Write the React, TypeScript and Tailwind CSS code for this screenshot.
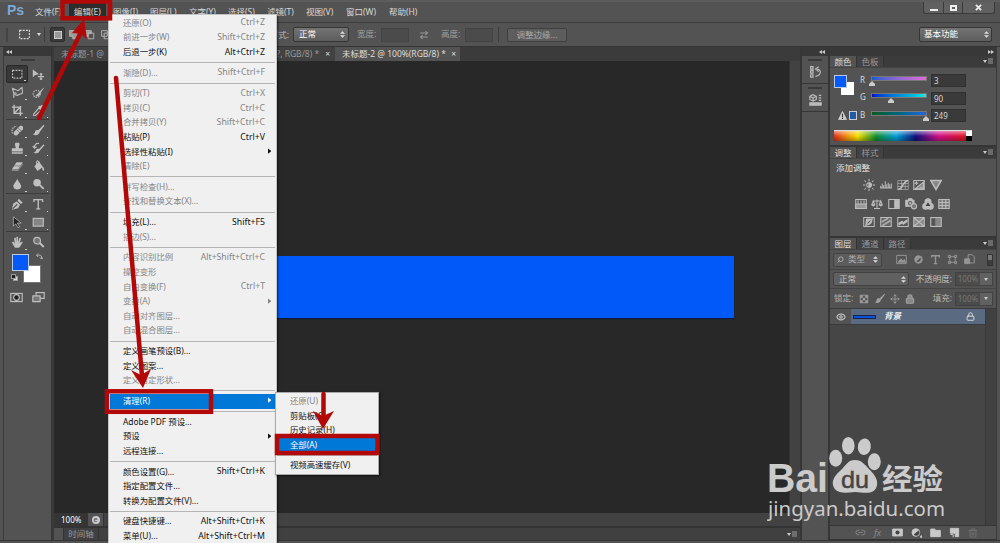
import React from 'react';
import { Link2, Trash2, Lock, Move, Search, Eye, ArrowLeftRight } from 'lucide-react';

type MenuEntry = {
  label: string;
  keys?: string;
  enabled?: boolean;
  submenu?: boolean;
  active?: boolean;
};

const menuBar = [
  { label: '文件(F)', width: 'w-[39px]' },
  { label: '编辑(E)', width: 'w-[39px]', open: true },
  { label: '图像(I)', width: 'w-[37px]' },
  { label: '图层(L)', width: 'w-[39px]' },
  { label: '文字(Y)', width: 'w-[39px]' },
  { label: '选择(S)', width: 'w-[39px]' },
  { label: '滤镜(T)', width: 'w-[39px]' },
  { label: '视图(V)', width: 'w-[40px]' },
  { label: '窗口(W)', width: 'w-[43px]' },
  { label: '帮助(H)', width: 'w-[40px]' },
];

const editMenu: MenuEntry[][] = [
  [
    { label: '还原(O)', keys: 'Ctrl+Z' },
    { label: '前进一步(W)', keys: 'Shift+Ctrl+Z' },
    { label: '后退一步(K)', keys: 'Alt+Ctrl+Z', enabled: true },
  ],
  [{ label: '渐隐(D)...', keys: 'Shift+Ctrl+F' }],
  [
    { label: '剪切(T)', keys: 'Ctrl+X' },
    { label: '拷贝(C)', keys: 'Ctrl+C' },
    { label: '合并拷贝(Y)', keys: 'Shift+Ctrl+C' },
    { label: '粘贴(P)', keys: 'Ctrl+V', enabled: true },
    { label: '选择性粘贴(I)', enabled: true, submenu: true },
    { label: '清除(E)' },
  ],
  [{ label: '拼写检查(H)...' }, { label: '查找和替换文本(X)...' }],
  [{ label: '填充(L)...', keys: 'Shift+F5', enabled: true }, { label: '描边(S)...' }],
  [
    { label: '内容识别比例', keys: 'Alt+Shift+Ctrl+C' },
    { label: '操控变形' },
    { label: '自由变换(F)', keys: 'Ctrl+T' },
    { label: '变换(A)', submenu: true },
    { label: '自动对齐图层...' },
    { label: '自动混合图层...' },
  ],
  [
    { label: '定义画笔预设(B)...', enabled: true },
    { label: '定义图案...', enabled: true },
    { label: '定义自定形状...' },
  ],
  [{ label: '清理(R)', enabled: true, submenu: true, active: true }],
  [
    { label: 'Adobe PDF 预设...', enabled: true },
    { label: '预设', enabled: true, submenu: true },
    { label: '远程连接...', enabled: true },
  ],
  [
    { label: '颜色设置(G)...', keys: 'Shift+Ctrl+K', enabled: true },
    { label: '指定配置文件...', enabled: true },
    { label: '转换为配置文件(V)...', enabled: true },
  ],
  [
    { label: '键盘快捷键...', keys: 'Alt+Shift+Ctrl+K', enabled: true },
    { label: '菜单(U)...', keys: 'Alt+Shift+Ctrl+M', enabled: true },
  ],
];

const purgeMenu: MenuEntry[] = [
  { label: '还原(U)' },
  { label: '剪贴板(C)', enabled: true },
  { label: '历史记录(H)', enabled: true },
  { label: '全部(A)', enabled: true, active: true },
];

const Glyph = ({ children, className = 'h-[14px] w-[14px]' }: { children: React.ReactNode; className?: string }) => (
  <svg viewBox="0 0 16 16" className={`shrink-0 ${className}`} fill="none" stroke="currentColor" strokeWidth="1.4">
    {children}
  </svg>
);

// Toolbox glyphs, two per row
const toolGroups: React.ReactNode[][] = [
  [
    <rect x="2" y="3" width="12" height="10" strokeDasharray="2.4 1.4" />,
    <><path d="M1 2v10l3-3 5-1z" fill="currentColor" stroke="none" /><path d="M11.500 7v8M7.500 11h8M10 8.500l1.500-1.500L13 8.500M10 13.500l1.500 1.500 1.500-1.500" /></>,
    <path d="M3 15c1-1 1-2 0-3M4 12L2 3l7 3 5-4 1 7-7 3-4-1c-2-2 2-3 3-1" />,
    <><circle cx="6" cy="10" r="4.500" strokeDasharray="2 1.200" /><path d="M15 2L9 8l-5 5c4 1 7-1 7-4l4-6z" fill="currentColor" stroke="none" /></>,
    <path d="M4 1v11h11M1 4h11v11M5 11l8-8" strokeWidth="1.800" />,
    <><path d="M9 5l3 3-8 7H2v-2z" /><path d="M8 4l5 5 1-2-1-1 2-3-2-2-3 2-1-1z" fill="currentColor" stroke="none" /></>,
  ],
  [
    <><path d="M2 12c-2-5 1-9 5-9" strokeDasharray="2 1" /><path d="M4 10l7-7c3-2 6 1 4 4l-7 7c-3 2-6-1-4-4z" fill="currentColor" stroke="none" /><path d="M7 7l5 5M9 5l5 5" stroke="#535353" strokeWidth=".8" /></>,
    <path d="M15 1L8 8c-2-1-4 0-4 2s-2 3-3 3c4 3 8 1 9-3l6-8z" fill="currentColor" stroke="none" />,
    <path d="M6 1h4c2 2 0 4 0 7h5v4H1V8h5c0-3-2-5 0-7zM1 13h14v2H1z" fill="currentColor" stroke="none" />,
    <><path d="M15 3L9 9c-2-1-4 0-4 2s-2 2-3 2c4 3 7 1 8-2l6-7z" fill="currentColor" stroke="none" /><path d="M9 2C5 1 3 4 3 8M1 5l2 3 3-2" /></>,
    <><path d="M7 3h8L9 12H1z" fill="currentColor" stroke="none" /><path d="M9 12l6-9v3l-6 8H1v-2" fill="#8a8a8a" stroke="none" /><path d="M4 7.500h8" stroke="#6d6d6d" strokeWidth=".8" /></>,
    <><path d="M3 8l6-6 5 7-7 5zM13 8c3 2 3 4 2 6-2 0-2-3-2-6z" fill="currentColor" stroke="none" /><path d="M6 7V3c0-3 3-2 3 1" /></>,
    <path d="M8 1c1 4 5 6 5 10 0 5-10 5-10 0 0-4 4-6 5-10z" fill="currentColor" stroke="none" />,
    <><circle cx="6.500" cy="6" r="4.800" fill="currentColor" stroke="none" /><path d="M10 9l5 5" strokeWidth="2.200" /></>,
  ],
  [
    <><path d="M10 1l5 5-3 2-3 5-8 2 2-8 5-3z" fill="currentColor" stroke="none" /><path d="M2 14l6-6M8 4l5 5" stroke="#535353" /></>,
    <path d="M2.500 5V2h11v3M8 2v12M5.500 14h5" strokeWidth="1.700" />,
    <path d="M3 1v12l3-3 3 5 2-1-3-5h5z" fill="#222" strokeWidth=".9" />,
    <rect x="1.500" y="3" width="13" height="10" fill="#858585" />,
  ],
  [
    <path d="M5 15L1 8l2-1 2 3-1-7 2-1 1 6V1h2v7l2-6 2 1-2 6 3-2 1 1-3 5-2 2z" fill="currentColor" stroke="none" />,
    <><circle cx="6.500" cy="6" r="4.300" fill="#777" /><path d="M10 9l5 5" strokeWidth="2.500" /></>,
  ],
];

const adjustments: React.ReactNode[][] = [
  [
    <><circle cx="8" cy="8" r="3" /><path d="M8 5a3 3 0 010 6zM8 0v3M8 13v3M0 8h3M13 8h3M2 2l2 2M12 12l2 2M14 2l-2 2M2 14l2-2" fill="currentColor" /></>,
    <path d="M1 12V9M3 12V6M5 12V8M7 12V3M9 12V7M11 12V5M13 12V7M15 12V6M0 12h16" strokeWidth="1.300" />,
    <><path d="M1 2h14v12H1zM6 2v12M11 2v12M1 6h14M1 10h14" strokeWidth=".8" /><path d="M1 14c8 0 5-11 14-12" strokeWidth="1.900" /></>,
    <><path d="M1 2h14v12H1z" /><path d="M3 13L14 4v9z" fill="#888" /><path d="M4.500 3v5M2 5.500h5M9 11h4" /></>,
    <path d="M1 2h14L8 14z" fill="#888" strokeWidth="2" />,
  ],
  [
    <><path d="M1 2h14v12H1zM4 3v5M8 3v5M12 3v5" /><path d="M1 8h14v6H1z" fill="#999" /></>,
    <path d="M8 2v12M4 14h8M3 4h10M3 4L1 9h4zM13 4l-2 5h4zM1 9c1 2 3 2 4 0M11 9c1 2 3 2 4 0" />,
    <><path d="M1 2h14v12H1z" /><path d="M9 3h5v10H9z" fill="currentColor" /></>,
    <><path d="M1 3h3l1-2h4l1 2h2v8H1z" fill="currentColor" /><circle cx="7" cy="7" r="2.300" stroke="#535353" /><circle cx="12" cy="11" r="3.500" fill="#777" /></>,
    <><circle cx="8" cy="5" r="4" fill="currentColor" /><circle cx="5" cy="11" r="4" fill="currentColor" /><circle cx="11" cy="11" r="4" fill="currentColor" /><path d="M8 7l2 3H6z" fill="#444" stroke="#444" /></>,
    <path d="M1 2h14v12H1zM1 6h14M1 10h14M5.500 2v12M10.500 2v12" fill="#777" strokeWidth="1.400" />,
  ],
  [
    <><path d="M1 2h14v12H1zM3 13L13 3" /><path d="M5 4h7c0 6-3 8-8 8 0-3 0-6 1-8z" fill="currentColor" /><path d="M6 10l4-4" stroke="#555" /></>,
    <><path d="M1 2h14v12H1z" fill="#666" /><path d="M2 8l9-5M3 13l11-7" strokeWidth="2.600" stroke="#aaa" /></>,
    <><path d="M1 2h14v12H1z" /><path d="M2 9l5-3 1 2 6-4v4l-6 4-1-2-5 3z" fill="currentColor" stroke="none" /></>,
    <path d="M1 2h14v12H1zM1 2l14 12M15 2L1 14M1 2l7 6-7 6z" fill="#888" />,
    <><path d="M1 2h14v12H1z" fill="#888" /><path d="M2 3h5v10H2z" fill="#555" stroke="none" /></>,
  ],
];

const MenuRow = ({ item }: { item: MenuEntry }) => (
  <div
    className={`flex h-[14.6px] items-center pr-[10px] pl-[13px] whitespace-nowrap ${
      item.active ? 'bg-[#0078d7] text-white' : item.enabled ? 'text-[#111]' : 'text-[#858585]'
    }`}
  >
    <span>{item.label}</span>
    {item.keys && <span className="ml-auto text-[8.700px]">{item.keys}</span>}
    {item.submenu && (
      <svg viewBox="0 0 4 6" className="mr-[-6px] mb-[2px] ml-auto h-[6px] w-[3.500px]">
        <path d="M0 0l4 3-4 3z" fill="currentColor" />
      </svg>
    )}
  </div>
);

const UpDown = () => (
  <svg viewBox="0 0 6 8" className="h-[7px] w-[5px] shrink-0">
    <path d="M0 3l3-3 3 3zM0 5l3 3 3-3z" fill="#ddd" />
  </svg>
);

const Chevrons = ({ flip = false }: { flip?: boolean }) => (
  <svg viewBox="0 0 6 4" className={`h-[4px] w-[6px] ${flip ? 'rotate-180' : ''}`}>
    <path d="M3 0v4L0 2zM6 0v4L3 2z" fill="#ccc" />
  </svg>
);

const PanelMenu = () => (
  <svg viewBox="0 0 10 7" className="ml-auto h-[7px] w-[10px]">
    <path d="M0 2h4L2 5z" fill="#ccc" />
    <path d="M5 1h5M5 3h5M5 5h5" stroke="#999" />
  </svg>
);

const PanelTabs = ({ tabs }: { tabs: string[] }) => (
  <div className="flex h-[12px] shrink-0 items-stretch border-b border-[#444] bg-[#3b3b3b] pr-[3px] leading-[12px]">
    {tabs.map((tab, i) => (
      <div
        key={tab}
        className={`w-[27px] border-r border-[#333] text-center ${i === 0 ? 'bg-[#535353] text-[#ddd]' : 'bg-[#424242] text-[#999]'}`}
      >
        {tab}
      </div>
    ))}
    <div className="ml-auto flex items-center">
      <PanelMenu />
    </div>
  </div>
);

const Toolbox = () => (
  <div className="flex w-[48px] shrink-0 flex-col border-r border-[#353535] text-[#c0c0c0]">
    <div className="flex h-[9px] shrink-0 items-center bg-[#383838] pl-[2px]">
      <Chevrons />
    </div>
    <div className="mx-auto mt-[3px] mb-[4px] h-[2px] w-[14px] shrink-0 border-y border-[#3a3a3a]" />
    {toolGroups.map((group, g) => (
      <div
        key={g}
        className={`mx-[2px] mb-[1px] grid grid-cols-2 ${g < toolGroups.length - 1 ? 'border-b border-[#3c3c3c]' : 'pb-px'}`}
      >
        {group.map((icon, i) => (
          <div
            key={i}
            className={`relative flex h-[18px] items-center justify-center ${
              g === 0 && i === 0 ? 'rounded-[2px] border border-[#292929] bg-[#383838]' : ''
            }`}
          >
            <Glyph className="h-[12.500px] w-[12.500px]">{icon}</Glyph>
            {!(g === 0 && i === 1) && !(g === 3 && i === 1) && (
              <span className="absolute right-[1px] bottom-[1px] h-[1.500px] w-[1.500px] bg-[#ccc]" />
            )}
          </div>
        ))}
      </div>
    ))}
    <div className="relative -mt-[1px] ml-[8px] h-[31px] w-[29px] shrink-0">
      <div className="absolute right-0 bottom-0 h-[18px] w-[18px] border border-[#777] bg-white" />
      <div className="absolute top-[2px] left-0 h-[17px] w-[17px] border border-[#b5cae8] bg-[#035af9]" />
      <Glyph className="absolute top-[1px] right-[-2px] h-[7px] w-[7px]">
        <path d="M2 5h7c3 0 4 2 4 8M5 1L1 5l4 4M9 10l4 4 3-4" strokeWidth="2" />
      </Glyph>
      <div className="absolute bottom-[2px] left-[1px] h-[5px] w-[5px] border border-[#999] bg-[#ddd]" />
      <div className="absolute bottom-[4px] left-[-1px] h-[5px] w-[5px] border border-[#999] bg-[#222]" />
    </div>
    <div className="mx-[2px] mt-[5px] grid h-[18px] grid-cols-2 place-items-center">
      <Glyph className="h-[13px] w-[13px]">
        <rect x="1" y="3" width="14" height="10" />
        <circle cx="8" cy="8" r="3.500" fill="#222" />
      </Glyph>
      <Glyph className="h-[13px] w-[13px]">
        <path d="M5 2h10v7H5z" />
        <path d="M1 6h9v7H1z" fill="#777" />
      </Glyph>
    </div>
  </div>
);

const ColorSlider = ({ name, value, track, thumb }: { name: string; value: string; track: string; thumb: string }) => (
  <div className="flex h-[17.500px] items-center">
    <span className="w-[11px] pb-[2px] text-[8px]">{name}</span>
    <div className="relative mb-[5px] h-[5px] w-[56px]">
      <div className={`h-full w-full border border-[#777] ${track}`} />
      <svg viewBox="0 0 6 5" className={`absolute top-[5px] h-[5px] w-[6px] ${thumb}`}>
        <path d="M3 0l3 3v2H0V3z" fill="#ccc" />
      </svg>
    </div>
    <div className="ml-[4px] h-[13px] w-[35px] border border-[#303030] bg-[#3a3a3a] pl-[2px] text-[8px] leading-[12px]">{value}</div>
  </div>
);

const ColorPanel = () => (
  <>
    <PanelTabs tabs={['颜色', '色板']} />
    <div className="flex h-[62px] shrink-0 pt-[4px]">
      <div className="relative w-[30px]">
        <div className="absolute top-[10px] left-[11px] h-[13px] w-[13px] bg-white" />
        <div className="absolute top-[3px] left-[4px] h-[13px] w-[13px] border border-[#b5cae8] bg-[#035af9]" />
        <div className="absolute top-[39px] left-[8px] flex items-center gap-[2px]">
          <Glyph className="h-[9px] w-[9px]">
            <path d="M8 1l7 14H1z" fill="#ccc" />
            <path d="M8 5v6M8 12v2" stroke="#333" strokeWidth="2" />
          </Glyph>
          <div className="h-[9px] w-[8px] border border-[#ccc] bg-[#1f5ba7]" />
        </div>
      </div>
      <div>
        <ColorSlider name="R" value="3" track="bg-linear-to-r from-[#1a5ad0] to-[#e668d8]" thumb="left-[-2px]" />
        <ColorSlider name="G" value="90" track="bg-linear-to-r from-[#0808d0] to-[#2ae6dc]" thumb="left-[17px]" />
        <ColorSlider name="B" value="249" track="bg-linear-to-r from-[#0c5a18] to-[#2464e0]" thumb="left-[52px]" />
      </div>
    </div>
    <div className="ml-[4px] flex h-[11px] w-[138px] shrink-0 border-t border-[#ddd]">
      <div className="w-[132px] bg-[linear-gradient(to_right,#e03020,#f08010_8%,#f5e000_18%,#109030_32%,#00a0d8_47%,#101080_62%,#d0108a_79%,#e01820)]">
        <div className="h-full bg-linear-to-b from-white/50 via-transparent to-black/30" />
      </div>
      <div className="w-[6px] bg-black">
        <div className="h-[5px] bg-white" />
      </div>
    </div>
    <div className="h-[6px] shrink-0 border-b-2 border-[#363636]" />
  </>
);

const AdjustmentsPanel = () => (
  <>
    <PanelTabs tabs={['调整', '样式']} />
    <div className="h-[79px] shrink-0 border-b-2 border-[#363636] pt-[3px] text-[#bdbdbd]">
      <div className="pl-[6px] leading-[12px] text-[#e2e2e2]">添加调整</div>
      <div className="mt-[2px] flex w-[145px] flex-col items-center">
        {adjustments.map((row, r) => (
          <div key={r} className="flex h-[18.500px] items-center gap-[4.800px]">
            {row.map((icon, i) => (
              <Glyph key={i} className="h-[12px] w-[12px]">{icon}</Glyph>
            ))}
          </div>
        ))}
      </div>
    </div>
  </>
);

const PercentField = () => (
  <div className="flex h-[14px] w-[38px] border border-[#424242] bg-[#4b4b4b] leading-[12px] text-[#777]">
    <span className="w-[24px] text-center text-[8px]">100%</span>
    <span className="flex flex-1 items-center justify-center bg-[#616161]">
      <svg viewBox="0 0 4 3" className="h-[3px] w-[4px]"><path d="M0 0h4L2 3z" fill="#ccc" /></svg>
    </span>
  </div>
);

const LayersPanel = () => (
  <>
    <PanelTabs tabs={['图层', '通道', '路径']} />
    <div className="flex h-[20px] shrink-0 items-center border-b border-[#444] px-[3px] text-[#b0b0b0]">
      <div className="flex h-[14px] w-[49px] items-center gap-[4px] rounded-[2px] border border-[#424242] bg-[#5c5c5c] px-[3px]">
        <Search className="h-[7px] w-[7px] shrink-0 -scale-x-100" strokeWidth={3} />
        <span className="whitespace-nowrap">类型</span>
        <span className="ml-auto flex"><UpDown /></span>
      </div>
      <div className="ml-[14px] flex items-center gap-[6px] text-[#959595]">
        <Glyph className="h-[11px] w-[11px]"><path d="M1 2h14v12H1z" /><path d="M3 12l4-5 3 3 2-2 2 4z" fill="currentColor" /></Glyph>
        <Glyph className="h-[11px] w-[11px]"><circle cx="8" cy="8" r="5.500" fill="currentColor" /><path d="M11 5a4.500 4.500 0 01-6 6z" fill="#555" stroke="none" /></Glyph>
        <Glyph className="h-[11px] w-[11px]"><path d="M2.500 5V2.500h11V5M8 2v12M5.500 14h5" strokeWidth="2" /></Glyph>
        <Glyph className="h-[11px] w-[11px]"><path d="M4 4h8v8H4zM2 2h3v3H2zM11 2h3v3h-3zM2 11h3v3H2zM11 11h3v3h-3z" /></Glyph>
        <Glyph className="h-[11px] w-[11px]"><path d="M6 7V1h6l3 3v9H8" /><path d="M1 7h7v7H1z" fill="currentColor" /></Glyph>
      </div>
      <div className="ml-auto h-[12px] w-[6px] border border-[#333] bg-[#3d3d3d]"><div className="h-[5px] bg-[#777]" /></div>
    </div>
    <div className="flex h-[19px] shrink-0 items-center border-b border-[#444] px-[3px] text-[#c0c0c0]">
      <div className="flex h-[14px] w-[76px] items-center justify-between rounded-[2px] border border-[#424242] bg-[#606060] pr-[2px] pl-[5px]">
        正常
        <UpDown />
      </div>
      <span className="mr-[3px] ml-auto whitespace-nowrap">不透明度:</span>
      <PercentField />
    </div>
    <div className="flex h-[19px] shrink-0 items-center px-[3px] text-[#b5b5b5]">
      <span className="pl-[1px] whitespace-nowrap">锁定:</span>
      <div className="ml-[6px] flex items-center gap-[5px] text-[#a0a0a0]">
        <Glyph className="h-[10px] w-[10px]"><path d="M2 2h12v12H2z" /><path d="M2 2h4v4H2zM10 2h4v4h-4zM6 6h4v4H6zM2 10h4v4H2zM10 10h4v4h-4z" fill="currentColor" stroke="none" /></Glyph>
        <Glyph className="h-[11px] w-[11px]">{toolGroups[1][1]}</Glyph>
        <Move className="h-[10px] w-[10px]" />
        <Lock className="h-[10px] w-[10px]" fill="#888" strokeWidth={2.5} />
      </div>
      <span className="mr-[3px] ml-auto whitespace-nowrap">填充:</span>
      <PercentField />
    </div>
    <div className="flex min-h-0 flex-1 border-t border-[#3a3a3a] bg-[#464646]">
      <div className="flex-1">
        <div className="flex h-[16px] items-center border-b border-[#3a3a3a] bg-[#5a6a80]">
          <div className="flex h-full w-[21px] items-center justify-center bg-[#535353]">
            <Eye className="h-[10px] w-[10px] text-[#ccc]" strokeWidth={2.500} />
          </div>
          <div className="ml-[2px] h-[4px] w-[23px] border border-[#17254a] bg-[#0d51d6]" />
          <span className="ml-[8px] font-bold text-[#eee] italic">背景</span>
          <Lock className="mr-[10px] ml-auto h-[9px] w-[9px] text-[#ddd]" strokeWidth={2.500} />
        </div>
      </div>
      <div className="w-[11px] border-l border-[#393939] bg-[#414141]" />
    </div>
    <div className="flex h-[15px] shrink-0 items-center gap-[8px] border-y border-[#353535] pl-[25px] text-[#c8c8c8]">
      <Link2 className="h-[11px] w-[11px] text-[#888]" />
      <span className="w-[10px] text-[9px] text-[#888] italic">fx</span>
      <Glyph className="h-[11px] w-[11px]"><path d="M1 3h14v10H1z" fill="currentColor" /><circle cx="8" cy="8" r="3" fill="#444" stroke="none" /></Glyph>
      <Glyph className="h-[11px] w-[11px]"><circle cx="7" cy="8" r="5.500" fill="currentColor" /><path d="M11 5a4.500 4.500 0 01-7 6z" fill="#444" stroke="none" /><path d="M14 13h2v2h-2z" fill="currentColor" /></Glyph>
      <Glyph className="h-[11px] w-[11px]"><path d="M1 3h6l1 2h7v9H1z" fill="currentColor" /></Glyph>
      <Glyph className="h-[11px] w-[11px]"><path d="M2 2h12v12H9V9H2z" fill="currentColor" /><path d="M2 11h4v4" /></Glyph>
      <Trash2 className="h-[10px] w-[10px] text-[#777]" />
    </div>
  </>
);

const Watermark = () => (
  <svg viewBox="0 0 180 90" className="absolute top-[435px] left-[767px] h-[90px] w-[180px]" fill="#cbcbcb">
    <text x="0" y="56.500" textLength="61" lengthAdjust="spacingAndGlyphs" className="font-['Liberation_Sans',sans-serif] text-[40px] font-bold">Bai</text>
    <ellipse cx="68.700" cy="23.300" rx="6.500" ry="8.500" />
    <ellipse cx="81.300" cy="10.700" rx="6.300" ry="8.700" />
    <ellipse cx="97.300" cy="11.700" rx="6.500" ry="8.300" transform="rotate(8 97 12)" />
    <ellipse cx="107.300" cy="26.700" rx="6.500" ry="8.500" />
    <path d="M88 25c-7 0-9 5-14 10-6 5-9 10-8 15 2 9 11 8 22 7 11 1 20 3 22-7 1-5-2-10-7-15-5-5-8-10-15-10z" />
    <text x="74" y="53" textLength="28" lengthAdjust="spacingAndGlyphs" fill="#454545" stroke="#454545" strokeWidth=".5" className="font-['Liberation_Sans',sans-serif] text-[24px]">du</text>
    <text x="115" y="55" textLength="61" lengthAdjust="spacingAndGlyphs" className="font-['Noto_Sans_CJK_SC',sans-serif] text-[29px] font-bold">经验</text>
    <text x="1" y="80.500" textLength="177" lengthAdjust="spacingAndGlyphs" className="font-['Noto_Sans',sans-serif] text-[20px]">jingyan.baidu.com</text>
  </svg>
);

// Red boxes and arrows that walk through the steps
const Annotations = () => (
  <svg viewBox="0 0 1000 543" className="absolute inset-0 h-[543px] w-[1000px]" fill="none" stroke="#b20808" strokeWidth="4.500" strokeLinecap="round">
    <rect x="62.500" y="1.500" width="47.500" height="16.800" />
    <rect x="107" y="391.300" width="104" height="20.500" />
    <rect x="277" y="436" width="100.500" height="17" />
    <path d="M39 118L83 28M116 78l26 298M323.500 394v24" />
    <g fill="#b20808" stroke="none">
      <path d="M84 19l3 20-6-5-9-1z" />
      <path d="M143 388l-12-18 10 5 10-6z" />
      <path d="M323 429l-10-18 10 5 11-5z" />
    </g>
  </svg>
);

export default function App() {
  return (
    <div className="relative flex h-[543px] w-[1000px] flex-col overflow-hidden bg-[#535353] font-['Noto_Sans','Noto_Sans_CJK_SC',sans-serif] text-[8.500px] text-[#d8d8d8]">
      {/* Menu bar */}
      <header className="flex h-[23px] shrink-0 items-start border-t-2 border-b border-t-[#5d5d5d] border-b-[#3d3d3d]">
        <div className="w-[35px] pl-[7px] font-['Liberation_Sans',sans-serif] text-[14px] leading-[17px] font-bold text-[#7ca9d6]">Ps</div>
        {menuBar.map((item) => (
          <div key={item.label} className={`h-[18px] leading-[19px] whitespace-nowrap ${item.width}`}>
            <span className={item.open ? '-ml-[5px] inline-block h-[15px] bg-[#2c2c2c] px-[5px]' : ''}>{item.label}</span>
          </div>
        ))}
        <div className="mr-[5px] ml-auto flex h-[12px] w-[72px] rounded-b-[3px] border border-t-0 border-[#3a3a3a] bg-[#616161]">
          <div className="flex w-[20px] items-center justify-center border-r border-[#3a3a3a]"><div className="mt-[4px] h-[2px] w-[8px] bg-[#eee]" /></div>
          <div className="flex w-[19px] items-center justify-center border-r border-[#3a3a3a]"><div className="h-[6px] w-[7px] border-2 border-[#eee]" /></div>
          <div className="flex flex-1 items-center justify-center"><Glyph className="h-[7px] w-[7px] text-[#eee]"><path d="M2 2l12 12M14 2L2 14" strokeWidth="4" /></Glyph></div>
        </div>
      </header>

      {/* Options bar */}
      <div className="flex h-[23px] shrink-0 items-center pl-[6px]">
        <div className="h-[14px] w-[2px] border-x border-[#444]" />
        <Glyph className="ml-[10px] h-[13px] w-[13px]"><rect x="2" y="3" width="12" height="10" strokeDasharray="2.400 1.400" /></Glyph>
        <svg viewBox="0 0 4 3" className="ml-[6px] h-[3px] w-[4px]"><path d="M0 0h4L2 3z" fill="#ddd" /></svg>
        <div className="ml-[3px] h-[15px] w-px bg-[#3d3d3d]" />
        <div className="ml-[5px] flex h-[15px] w-[15px] items-center justify-center rounded-[2px] border border-[#2c2c2c] bg-[#3a3a3a]">
          <div className="h-[8px] w-[8px] border border-[#ccc] bg-[#999]" />
        </div>
        <div className="ml-[4px] flex w-[220px] gap-[6px] text-[#bbb]">
          <Glyph className="h-[10px] w-[10px]"><path d="M1 1h9v4h5v9H6v-4H1z" fill="#999" /></Glyph>
          <Glyph className="h-[10px] w-[10px]"><path d="M1 1h9v4H5v5H1z" fill="#999" /><path d="M5 5h9v9H5z" /></Glyph>
          <Glyph className="h-[10px] w-[10px]"><path d="M1 1h9v9H1zM5 5h9v9H5z" /></Glyph>
          <span className="ml-auto leading-[10px] whitespace-nowrap">样式:</span>
        </div>
        <div className="ml-[4px] flex h-[15px] w-[56px] items-center justify-between rounded-[2px] border border-[#353535] bg-linear-to-b from-[#737373] to-[#5d5d5d] pr-[3px] pl-[5px] text-white">正常<UpDown /></div>
        <span className="ml-[8px] w-[24px] whitespace-nowrap text-[#a0a0a0]">宽度:</span>
        <div className="h-[14px] w-[28px] border border-[#434343] bg-[#4b4b4b]" />
        <ArrowLeftRight className="ml-[10px] h-[10px] w-[10px] -scale-y-100 text-[#999]" strokeWidth={2.5} />
        <span className="ml-[12px] w-[24px] whitespace-nowrap text-[#a0a0a0]">高度:</span>
        <div className="h-[14px] w-[28px] border border-[#434343] bg-[#4b4b4b]" />
        <div className="ml-[5px] h-[15px] w-px bg-[#3d3d3d]" />
        <div className="ml-[8px] h-[14px] w-[60px] rounded-[2px] border border-[#3f3f3f] bg-[#5d5d5d] text-center leading-[12px] text-[#aaa]">调整边缘...</div>
        <div className="mr-[8px] ml-auto flex h-[15px] w-[73px] items-center justify-between rounded-[2px] border border-[#353535] bg-linear-to-b from-[#737373] to-[#5d5d5d] pr-[2px] pl-[4px] text-white">基本功能<UpDown /></div>
      </div>

      {/* Workspace */}
      <div className="flex h-[495px] border-y border-[#343434] pr-[3px] pl-[3px]">
        <div className="w-px shrink-0 bg-[#3c3c3c]" />
        <Toolbox />
        <div className="w-[2px] shrink-0 bg-[#3a3a3a]" />

        <main className="flex w-[746px] shrink-0 flex-col">
          <div className="flex h-[14px] shrink-0 bg-[#3b3b3b] leading-[14px] text-[#999]">
            <div className="flex w-[281px] justify-between bg-[#424242] pr-[5px] pl-[7px]">
              <span>未标题-1 @</span>
              <span className="whitespace-nowrap">?, RGB/8) *<span className="ml-[6px] text-[#ddd]">×</span></span>
            </div>
            <div className="flex w-[125px] justify-between bg-[#535353] pr-[4px] pl-[7px] whitespace-nowrap text-[#ddd]">
              <span>未标题-2 @ 100%(RGB/8) *</span>
              <span>×</span>
            </div>
          </div>
          <div className="flex min-h-0 flex-1 bg-[#282828]">
            <div className="flex-1 pt-[195px]">
              {/* Document, centred in the canvas */}
              <div className="ml-[54px] h-[62px] w-[626px] bg-[#0259fa] shadow-[0_1px_1px_#0c1c40]" />
            </div>
            <div className="w-[11px] border-l border-[#333] bg-[#424242]" />
          </div>
          <div className="flex h-[13px] shrink-0 items-center bg-[#424242]">
            <div className="h-full w-[34px] bg-[#353535] pl-[7px] text-[8px] leading-[13px] text-white">100%</div>
            <div className="flex h-full w-[16px] items-center justify-center border-r border-[#333] bg-[#535353]">
              <div className="h-[8px] w-[8px] rounded-full bg-[#ccc] text-center text-[7px] leading-[7px] text-[#444]">e</div>
            </div>
          </div>
          <div className="flex h-[14px] shrink-0 items-center border-t-2 border-[#333] bg-[#404040] pr-[3px]">
            <div className="h-full w-[9px] bg-[#535353]" />
            <div className="h-full w-[36px] border-x border-[#333] text-center leading-[12px] text-[#999]">时间轴</div>
            <div className="ml-auto"><PanelMenu /></div>
          </div>
        </main>

        <div className="flex w-[30px] shrink-0 flex-col border-x-2 border-[#363636] text-[#bbb]">
          <div className="flex h-[9px] items-center justify-end bg-[#383838] pr-[3px]"><Chevrons /></div>
          <div className="flex h-[28px] flex-col items-center border-b border-[#363636] pt-[3px]">
            <div className="mb-[4px] h-[2px] w-[14px] border-y border-[#3a3a3a]" />
            <Glyph className="h-[13px] w-[13px]"><path d="M2 2h3v3H2zM2 7h3v3H2zM2 12h3v3H2zM8 14c8-2 7-8 2-9M12 2L8 5l4 3" /></Glyph>
          </div>
          <div className="flex h-[28px] flex-col items-center border-b border-[#363636] pt-[3px]">
            <div className="mb-[4px] h-[2px] w-[14px] border-y border-[#3a3a3a]" />
            <Glyph className="h-[13px] w-[13px]"><path d="M1 4l4-2 4 2v4l-4 2-4-2zM1 4l4 2 4-2M5 6v4M12 3h3M12 6h3M12 9h3" /><path d="M1 12h14v3H1z" fill="currentColor" /></Glyph>
          </div>
        </div>

        <aside className="flex min-w-0 flex-1 flex-col border-r border-[#3a3a3a]">
          <div className="flex h-[9px] shrink-0 items-center justify-end bg-[#383838] pr-[2px]"><Chevrons flip /></div>
          <ColorPanel />
          <AdjustmentsPanel />
          <LayersPanel />
        </aside>
      </div>

      <Watermark />

      {/* Edit menu */}
      <div className="absolute top-[14px] left-[108px] h-[535px] w-[169px] border border-[#c4c4c4] bg-[#f0f0f0] px-px pt-[0.700px] text-[8.400px] shadow-[1px_1px_2px_rgba(0,0,0,0.6)]">
        {editMenu.map((group, g) => (
          <React.Fragment key={g}>
            {g > 0 && <div className="my-[2.550px] h-px bg-[#b5b5b5]" />}
            {group.map((item) => (
              <MenuRow key={item.label} item={item} />
            ))}
          </React.Fragment>
        ))}
      </div>

      {/* Purge submenu */}
      <div className="absolute top-[392px] left-[275px] h-[83px] w-[104px] border border-[#aaa] bg-[#f0f0f0] px-px pt-[1px] text-[8.400px] shadow-[1px_1px_2px_rgba(0,0,0,0.6)]">
        {purgeMenu.map((item) => (
          <MenuRow key={item.label} item={item} />
        ))}
        <div className="my-[2.550px] h-px bg-[#b5b5b5]" />
        <MenuRow item={{ label: '视频高速缓存(V)', enabled: true }} />
      </div>

      <Annotations />
    </div>
  );
}
